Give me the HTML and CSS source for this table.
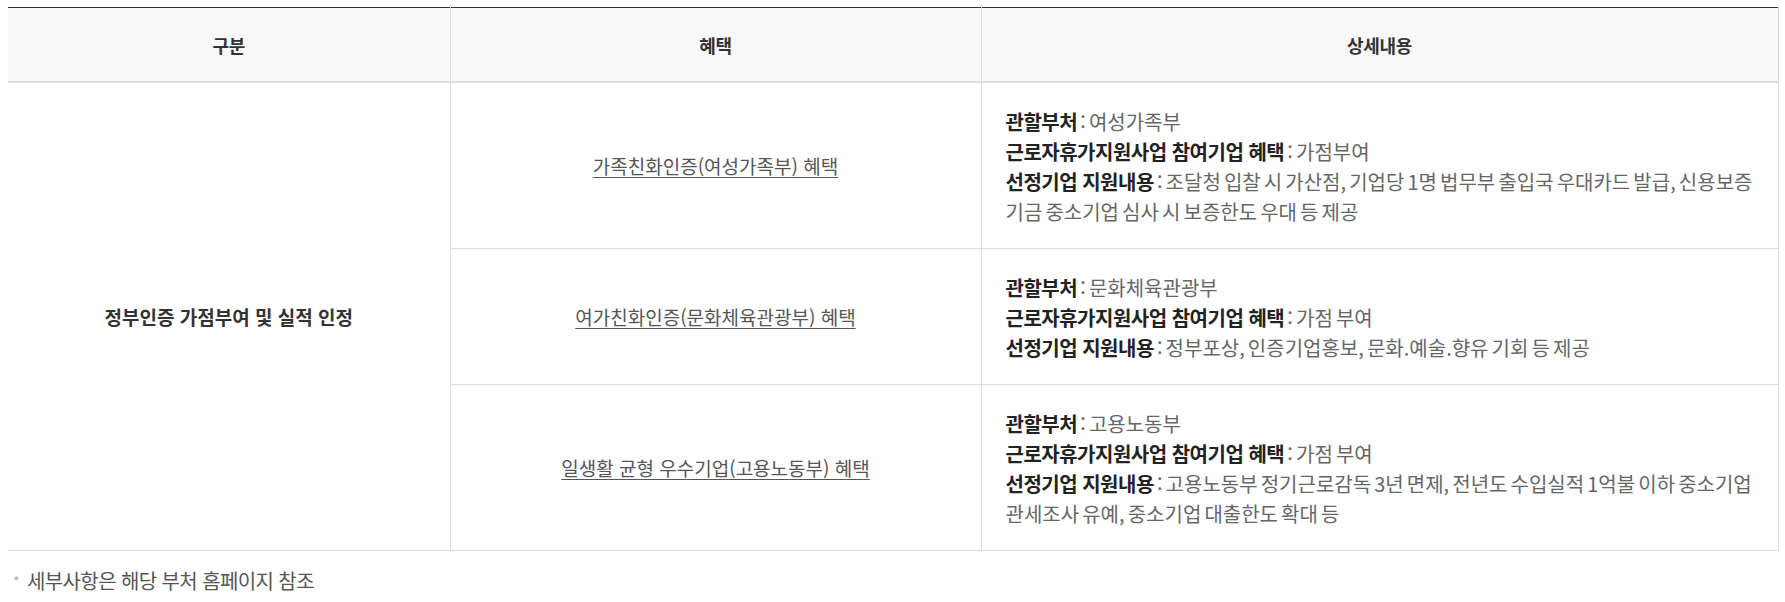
FILE: index.html
```html
<!DOCTYPE html>
<html lang="ko">
<head>
<meta charset="utf-8">
<link rel="stylesheet" href="styles.css">
</head>
<body>
<table class="tbl">
  <colgroup>
    <col class="c1">
    <col class="c2">
    <col class="c3">
  </colgroup>
  <thead>
    <tr>
      <th>구분</th>
      <th>혜택</th>
      <th class="last">상세내용</th>
    </tr>
  </thead>
  <tbody>
    <tr>
      <td rowspan="3" class="cat">정부인증 가점부여 및 실적 인정</td>
      <td class="ben"><a href="#">가족친화인증(여성가족부) 혜택</a></td>
      <td class="det">
        <p><strong>관할부처</strong> : 여성가족부</p>
        <p><strong>근로자휴가지원사업 참여기업 혜택</strong> : 가점부여</p>
        <p><strong>선정기업 지원내용</strong> : 조달청 입찰 시 가산점, 기업당 1명 법무부 출입국 우대카드 발급, 신용보증기금 중소기업 심사 시 보증한도 우대 등 제공</p>
      </td>
    </tr>
    <tr>
      <td class="ben"><a href="#">여가친화인증(문화체육관광부) 혜택</a></td>
      <td class="det">
        <p><strong>관할부처</strong> : 문화체육관광부</p>
        <p><strong>근로자휴가지원사업 참여기업 혜택</strong> : 가점 부여</p>
        <p><strong>선정기업 지원내용</strong> : 정부포상, 인증기업홍보, 문화.예술.향유 기회 등 제공</p>
      </td>
    </tr>
    <tr>
      <td class="ben"><a href="#">일생활 균형 우수기업(고용노동부) 혜택</a></td>
      <td class="det">
        <p><strong>관할부처</strong> : 고용노동부</p>
        <p><strong>근로자휴가지원사업 참여기업 혜택</strong> : 가점 부여</p>
        <p><strong>선정기업 지원내용</strong> : 고용노동부 정기근로감독 3년 면제, 전년도 수입실적 1억불 이하 중소기업 관세조사 유예, 중소기업 대출한도 확대 등</p>
      </td>
    </tr>
  </tbody>
</table>
<p class="note"><span class="star">*</span>세부사항은 해당 부처 홈페이지 참조</p>
</body>
</html>
```

FILE: styles.css
```css
html, body {
  margin: 0;
  padding: 0;
  background: #fff;
}
body {
  padding: 7px 8px 0 8px;
  font-family: "Noto Sans CJK KR", "Noto Sans", sans-serif;
  color: #666;
  font-size: 18px;
  letter-spacing: -0.03em;
}
.tbl {
  width: 1770px;
  border-collapse: collapse;
  table-layout: fixed;
  border-top: 1px solid #333;
}
.c1 { width: 442px; }
.c2 { width: 531px; }
.c3 { width: 797px; }
.tbl th {
  height: 73px;
  padding: 0;
  background: #f8f8f8;
  color: #333;
  font-size: 18px;
  letter-spacing: -0.02em;
  font-weight: 700;
  text-align: center;
  vertical-align: middle;
  border-bottom: 2px solid #ddd;
  border-left: 1px solid #ddd;
}
.tbl th:first-child { border-left: 0; }
.tbl th.last { border-right: 1px solid #ddd; }
.tbl td {
  border-bottom: 1px solid #ddd;
  border-left: 1px solid #ddd;
  vertical-align: middle;
  padding: 0;
}
.tbl td.cat {
  border-left: 0;
  text-align: center;
  color: #333;
  font-weight: 700;
  font-size: 19px;
  letter-spacing: 0;
}
.tbl td.ben {
  text-align: center;
}
.tbl td.ben a {
  color: #555;
  text-decoration: underline;
  text-underline-offset: 3px;
  font-size: 19px;
  letter-spacing: 0;
}
.tbl td.det {
  border-right: 1px solid #ddd;
  padding: 24px 24px 21px 24px;
  line-height: 30px;
  font-size: 20px;
  letter-spacing: 0;
  word-spacing: -2.5px;
}
.det p {
  margin: 0;
}
.det strong {
  color: #222;
  font-weight: 700;
  letter-spacing: -0.5px;
  word-spacing: normal;
}
.note {
  margin: 15px 0 0 0;
  padding-left: 5px;
  font-size: 20px;
  letter-spacing: -0.03em;
  color: #555;
  display: flex;
  align-items: center;
}
.note .star {
  color: #aaa;
  font-size: 14px;
  margin-right: 8px;
}
```
